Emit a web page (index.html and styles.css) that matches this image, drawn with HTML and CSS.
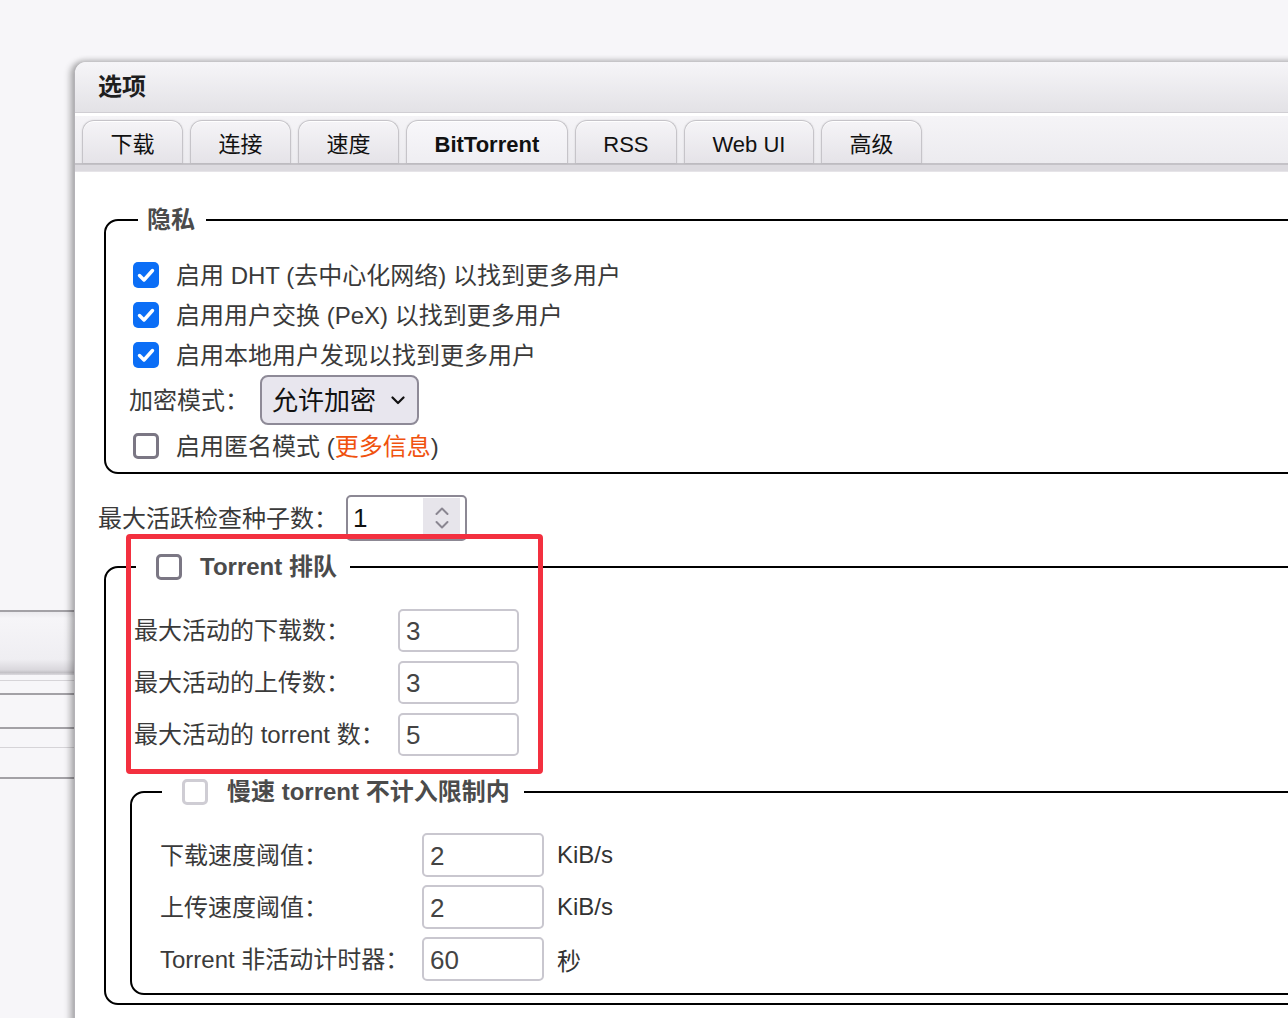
FILE: index.html
```html
<!DOCTYPE html>
<html lang="zh-CN">
<head>
<meta charset="utf-8">
<title>选项</title>
<link rel="stylesheet" href="styles.css">
</head>
<body>
<div class="desktop">
  <div class="bg-list">
    <div class="ln dark"></div>
    <div class="bg-bar"></div>
    <div class="ln light l-a"></div>
    <div class="ln dark l-b"></div>
    <div class="ln dark l-c"></div>
    <div class="ln light l-d"></div>
    <div class="ln dark l-e"></div>
  </div>

  <div class="window">
    <div class="titlebar">选项</div>
    <div class="tabbar">
      <div class="tab">下载</div>
      <div class="tab">连接</div>
      <div class="tab">速度</div>
      <div class="tab active">BitTorrent</div>
      <div class="tab">RSS</div>
      <div class="tab">Web UI</div>
      <div class="tab">高级</div>
    </div>
    <div class="tabstrip"></div>

    <div class="content">
      <fieldset class="fs fs-privacy">
        <legend class="lg-text">隐私</legend>
        <div class="check-row">
          <span class="cb checked"><svg viewBox="0 0 26 26" width="26" height="26"><path d="M6.5 13.5 L11 18 L19.5 8.5" fill="none" stroke="#fff" stroke-width="3.4" stroke-linecap="round" stroke-linejoin="round"/></svg></span>
          <span class="txt">启用 DHT (去中心化网络) 以找到更多用户</span>
        </div>
        <div class="check-row">
          <span class="cb checked"><svg viewBox="0 0 26 26" width="26" height="26"><path d="M6.5 13.5 L11 18 L19.5 8.5" fill="none" stroke="#fff" stroke-width="3.4" stroke-linecap="round" stroke-linejoin="round"/></svg></span>
          <span class="txt">启用用户交换 (PeX) 以找到更多用户</span>
        </div>
        <div class="check-row">
          <span class="cb checked"><svg viewBox="0 0 26 26" width="26" height="26"><path d="M6.5 13.5 L11 18 L19.5 8.5" fill="none" stroke="#fff" stroke-width="3.4" stroke-linecap="round" stroke-linejoin="round"/></svg></span>
          <span class="txt">启用本地用户发现以找到更多用户</span>
        </div>
        <div class="select-row">
          <span class="sel-label">加密模式：</span>
          <div class="select">
            <span class="sel-val">允许加密</span>
            <svg class="chev" viewBox="0 0 14 9" width="14" height="9"><path d="M1.5 1.5 L7 7 L12.5 1.5" fill="none" stroke="#111" stroke-width="2.2" stroke-linecap="round" stroke-linejoin="round"/></svg>
          </div>
        </div>
        <div class="check-row">
          <span class="cb"></span>
          <span class="txt">启用匿名模式 (<span class="link">更多信息</span>)</span>
        </div>
      </fieldset>

      <div class="spin-row">
        <span class="spin-label">最大活跃检查种子数：</span>
        <div class="spin">
          <span class="spin-val">1</span>
          <div class="spin-btn">
            <svg viewBox="0 0 16 10" width="16" height="10"><path d="M2.5 8 L8 2.5 L13.5 8" fill="none" stroke="#8a8691" stroke-width="2" stroke-linecap="round" stroke-linejoin="round"/></svg>
            <svg viewBox="0 0 16 10" width="16" height="10"><path d="M2.5 2 L8 7.5 L13.5 2" fill="none" stroke="#8a8691" stroke-width="2" stroke-linecap="round" stroke-linejoin="round"/></svg>
          </div>
        </div>
      </div>

      <fieldset class="fs fs-queue">
        <legend class="lg-check lg-queue"><span class="lg-inner"><span class="cb"></span><span class="lg-label">Torrent 排队</span></span></legend>
        <div class="form-grid queue-grid">
          <span class="flabel">最大活动的下载数：</span><span class="box">3</span>
          <span class="flabel">最大活动的上传数：</span><span class="box">3</span>
          <span class="flabel">最大活动的 torrent 数：</span><span class="box">5</span>
        </div>

        <fieldset class="fs fs-slow">
          <legend class="lg-check lg-slow"><span class="lg-inner"><span class="cb disabled"></span><span class="lg-label">慢速 torrent 不计入限制内</span></span></legend>
          <div class="form-grid slow-grid">
            <span class="flabel">下载速度阈值：</span><span class="box">2</span><span class="unit">KiB/s</span>
            <span class="flabel">上传速度阈值：</span><span class="box">2</span><span class="unit">KiB/s</span>
            <span class="flabel">Torrent 非活动计时器：</span><span class="box">60</span><span class="unit">秒</span>
          </div>
        </fieldset>
      </fieldset>
    </div>
  </div>

  <div class="highlight"></div>
</div>
</body>
</html>
```

FILE: styles.css
```css
* { box-sizing: border-box; }

html, body {
  margin: 0;
  padding: 0;
}

body {
  width: 1288px;
  height: 1018px;
  overflow: hidden;
  background: #f7f6f9;
  font-family: "Liberation Sans", "Noto Sans CJK SC", sans-serif;
  color: #333;
}

.desktop {
  position: relative;
  width: 1288px;
  height: 1018px;
  overflow: hidden;
}

/* list lying under the window on the left */
.bg-list {
  position: absolute;
  left: 0;
  top: 610px;
  width: 80px;
}
.bg-list .ln { height: 2px; }
.bg-list .dark { background: #a3a1a6; }
.bg-list .light { background: #d6d4d8; height: 1px; }
.bg-bar {
  height: 63px;
  background: linear-gradient(#ebeaee 0, #f6f5f8 10%, #efeef2 75%, #d9d7dc 92%, #c4c2c7 96%, #dcdadf 100%);
}
.bg-list .l-a { margin-top: 5px; }
.bg-list .l-b { margin-top: 12px; }
.bg-list .l-c { margin-top: 32px; }
.bg-list .l-d { margin-top: 18px; }
.bg-list .l-e { margin-top: 29px; }

/* window */
.window {
  position: absolute;
  left: 74px;
  top: 62px;
  width: 1400px;
  height: 1000px;
  background: #fff;
  border-top-left-radius: 12px;
  border-left: 1px solid #b4b2b7;
  box-shadow: -4px 0 6px rgba(0, 0, 0, 0.28), 0 -3px 5px rgba(0, 0, 0, 0.10);
}

.titlebar {
  height: 51px;
  padding-left: 23px;
  line-height: 50px;
  font-size: 24px;
  font-weight: bold;
  color: #1e1e1e;
  background: linear-gradient(#f6f5f8, #e3e2e6);
  border-top-left-radius: 11px;
  border-bottom: 1px solid #d0ced3;
}

.tabbar {
  margin-top: 3px;
  height: 47px;
  padding: 4px 0 0 7px;
  display: flex;
  gap: 7px;
  background: linear-gradient(#f5f4f7, #ecebef);
}

.tab {
  height: 43px;
  padding: 2px 27.5px 0;
  line-height: 43px;
  font-size: 22px;
  color: #111;
  border: 1px solid #c6c4c9;
  border-bottom: none;
  border-radius: 12px 12px 0 0;
  background: linear-gradient(#f5f4f7, #e5e3e8);
  box-shadow: inset 0 1px 0 #fff, 0 0 2px rgba(0, 0, 0, 0.12);
}
.tab.active {
  font-weight: bold;
  background: linear-gradient(#f8f7fa, #efeef2);
}

.tabstrip {
  height: 9px;
  border-top: 2px solid #c4c2c7;
  background: #dcdadf;
  border-bottom: 1px solid #e6e4e8;
}

.content {
  padding: 33px 0 0 25px;
}

/* fieldsets */
.fs {
  margin: 0;
  min-width: 0;
  border: 2px solid #000;
  border-radius: 14px;
}

.lg-text {
  margin-left: 9px;
  padding: 0 11px 0 9px;
  font-size: 24px;
  line-height: 30px;
  font-weight: bold;
  color: #4b4b4b;
}

.fs-privacy {
  width: 1300px;
  margin-left: 4px;
  padding: 20px 0 6px 23px;
}

.check-row {
  height: 40px;
  display: flex;
  align-items: center;
}

.cb {
  flex: none;
  width: 26px;
  height: 26px;
  margin: 0 17px 0 4px;
  border: 3px solid #7b7784;
  border-radius: 5px;
  background: #fff;
  display: block;
}
.cb.checked {
  border: none;
  background: #0b6ef6;
}
.cb svg { display: block; }
.cb.disabled { border-color: #cfcdd4; }

.txt {
  margin-bottom: 4px;
  font-size: 24px;
  color: #3a3a3a;
  white-space: nowrap;
}
.link { color: #f0520e; }

.select-row {
  height: 51px;
  display: flex;
  align-items: center;
}
.sel-label {
  width: 131px;
  margin-bottom: 4px;
  font-size: 24px;
  color: #3a3a3a;
  white-space: nowrap;
}
.select {
  width: 159px;
  height: 50px;
  margin-top: -1px;
  padding: 0 12px 0 10px;
  display: flex;
  align-items: center;
  justify-content: space-between;
  border: 2px solid #8e8a97;
  border-radius: 8px;
  background: #e8e6ee;
}
.sel-val {
  margin-bottom: 3px;
  font-size: 26px;
  color: #111;
  white-space: nowrap;
}
.chev { display: block; margin-top: 1px; }

.spin-row {
  margin-top: 21px;
  height: 46px;
  display: flex;
  align-items: center;
}
.spin-label {
  width: 248px;
  margin-left: -2px;
  margin-bottom: 4px;
  font-size: 24px;
  color: #3a3a3a;
  white-space: nowrap;
}
.spin {
  width: 121px;
  height: 46px;
  display: flex;
  align-items: center;
  justify-content: space-between;
  border: 2px solid #8c8894;
  border-radius: 5px;
}
.spin-val {
  padding-left: 5px;
  font-size: 26px;
  color: #111;
}
.spin-btn {
  width: 37px;
  height: 40px;
  margin-right: 5px;
  display: flex;
  flex-direction: column;
  align-items: center;
  justify-content: center;
  gap: 4px;
  background: #e7e5eb;
}
.spin-btn svg { display: block; }

.fs-queue {
  width: 1300px;
  margin: 11px 0 0 4px;
  padding: 27px 0 8px 24px;
}

.lg-check {
  padding: 0 13px 0 20px;
  line-height: 30px;
}
.lg-queue { margin-left: 6px; }
.lg-slow { margin-left: 2px; padding-right: 14px; }

.lg-inner {
  height: 30px;
  display: flex;
  align-items: center;
}
.lg-inner .cb { margin: 0 18px 0 0; }
.lg-slow .lg-inner .cb { margin-right: 19px; }
.lg-label {
  font-size: 24px;
  font-weight: bold;
  color: #4b4b4b;
  white-space: nowrap;
}

.form-grid {
  display: grid;
  align-items: center;
}
.queue-grid {
  margin-left: 4px;
  grid-template-columns: 264px 121px;
  row-gap: 9px;
}
.queue-grid .box { height: 43px; line-height: 41px; }

.flabel {
  margin-bottom: 4px;
  font-size: 24px;
  color: #3a3a3a;
  white-space: nowrap;
}
.box {
  display: block;
  height: 44px;
  padding-left: 6px;
  line-height: 42px;
  font-size: 26px;
  color: #444;
  border: 2px solid #c9c7cf;
  border-radius: 5px;
  background: #fff;
}

.fs-slow {
  width: 1280px;
  margin-top: 21px;
  padding: 26px 0 12px 28px;
}
.slow-grid {
  grid-template-columns: 262px 122px auto;
  row-gap: 8px;
}
.unit {
  margin-left: 13px;
  font-size: 24px;
  color: #333;
}

/* annotation overlay */
.highlight {
  position: absolute;
  left: 126px;
  top: 534px;
  width: 417px;
  height: 240px;
  border: 5px solid #f3303f;
  border-radius: 4px;
}
```
